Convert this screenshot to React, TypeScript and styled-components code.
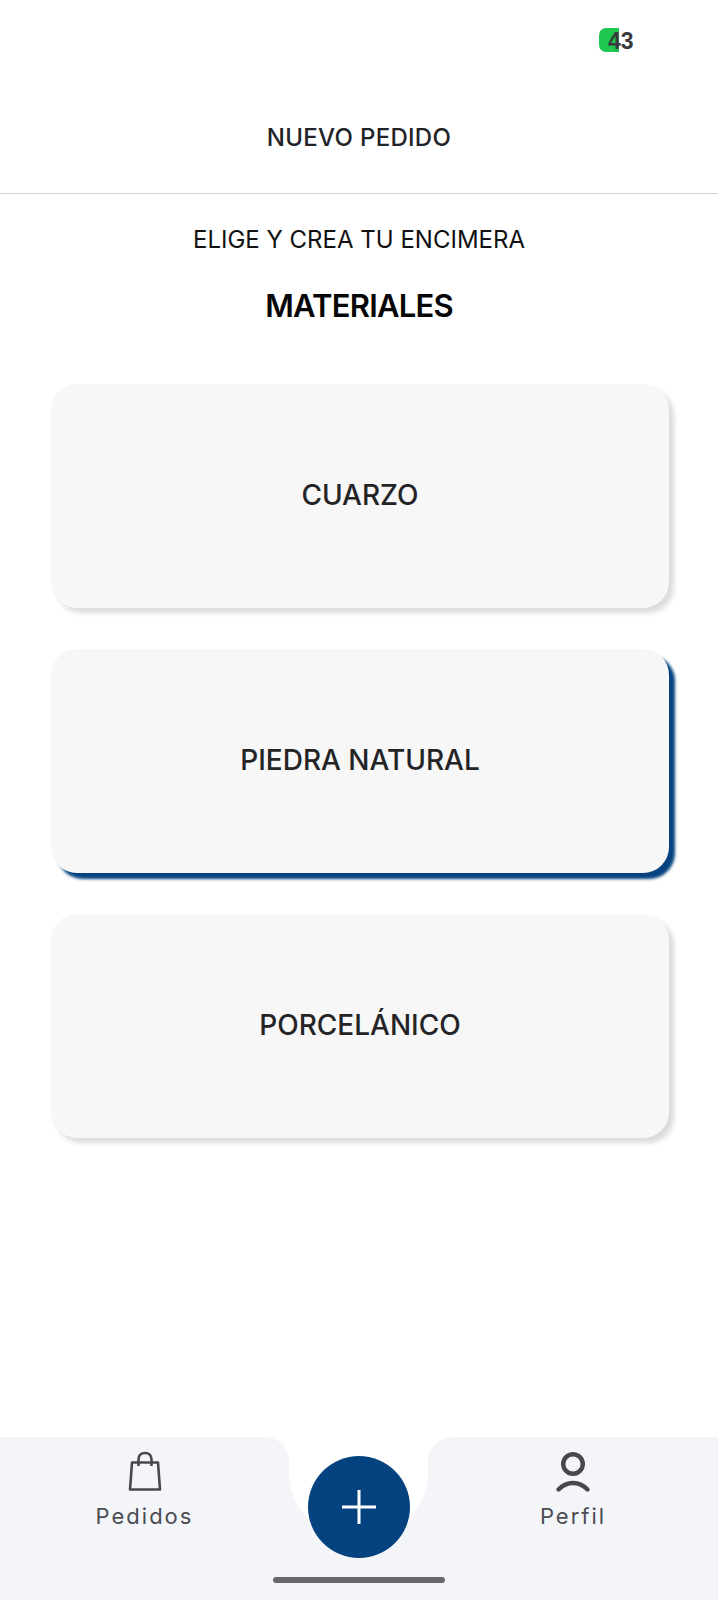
import { createGlobalStyle } from 'styled-components'
import styled from 'styled-components'

const MATERIALS = [
  { id: 1, name: 'CUARZO', active: false },
  { id: 2, name: 'PIEDRA NATURAL', active: true },
  { id: 3, name: 'PORCELÁNICO', active: false },
]

const GlobalStyle = createGlobalStyle`
  html, body {
    margin: 0;
    padding: 0;
    background: #fff;
  }
  * {
    box-sizing: border-box;
  }
`

const App = () => {
  return (
    <Page>
      <GlobalStyle />
      <StatusBar>
        <Battery>
          <BatteryFill />
          <BatteryText>43</BatteryText>
        </Battery>
      </StatusBar>

      <Header>
        <HeaderTitle>NUEVO PEDIDO</HeaderTitle>
      </Header>

      <Main>
        <Subtitle>ELIGE Y CREA TU ENCIMERA</Subtitle>
        <Title>MATERIALES</Title>

        <CardList>
          {MATERIALS.map((item) => (
            <Card key={item.id} $active={item.active}>
              {item.name}
            </Card>
          ))}
        </CardList>
      </Main>

      <BottomNav>
        <NavTab $side='left'>
          <svg width='36' height='42' viewBox='0 0 36 42' fill='none' stroke='#48484c' strokeWidth='2.6'>
            <path d='M5 11.5H31L33 38.5H3Z' strokeLinejoin='round' />
            <path d='M11.5 15V8.5C11.5 4.5 14 2 18 2S24.5 4.5 24.5 8.5V15' />
          </svg>
          <NavLabel>Pedidos</NavLabel>
        </NavTab>

        <NotchColumn>
          <Notch />
        </NotchColumn>

        <NavTab $side='right'>
          <svg width='36' height='42' viewBox='0 0 36 42' fill='none' stroke='#48484c' strokeWidth='4.4'>
            <circle cx='18' cy='13' r='9.8' />
            <path d='M3.5 38.5C8 34 13 32 18 32S28 34 32.5 38.5' strokeLinecap='round' />
          </svg>
          <NavLabel>Perfil</NavLabel>
        </NavTab>

        <AddButton>
          <svg width='36' height='36' viewBox='0 0 36 36' fill='none' stroke='#fff' strokeWidth='3'>
            <path d='M18 1V35M1 18H35' />
          </svg>
        </AddButton>
        <HomeIndicator />
      </BottomNav>
    </Page>
  )
}

const Page = styled.div`
  width: 718px;
  height: 1600px;
  display: flex;
  flex-direction: column;
  overflow: hidden;
  background: #fff;
  font-family: 'Inter', 'Noto Sans', sans-serif;
`

const StatusBar = styled.div`
  height: 80px;
  padding: 28px 82px 0 0;
  display: flex;
  justify-content: flex-end;
  align-items: flex-start;
`

const Battery = styled.div`
  position: relative;
  width: 37px;
  height: 26px;
`

const BatteryFill = styled.div`
  position: absolute;
  top: 0;
  left: 0;
  width: 20px;
  height: 24px;
  background: #1fc64f;
  border-radius: 7px 0 0 7px;
`

const BatteryText = styled.span`
  position: absolute;
  top: 0;
  left: 9px;
  font-family: 'Liberation Sans', sans-serif;
  font-size: 23px;
  line-height: 26px;
  font-weight: 700;
  color: #3a3a3c;
`

const Header = styled.header`
  height: 114px;
  padding-top: 42px;
  border-bottom: 1px solid #d2d2d2;
  text-align: center;
`

const HeaderTitle = styled.h1`
  margin: 0;
  font-size: 24px;
  line-height: 32px;
  font-weight: 500;
  letter-spacing: 0.3px;
  color: #222327;
`

const Main = styled.main`
  flex: 1;
  padding: 30px 49px 0 51px;
  display: flex;
  flex-direction: column;
`

const Subtitle = styled.div`
  margin: 0 -49px 0 -51px;
  font-size: 24px;
  line-height: 32px;
  font-weight: 400;
  text-align: center;
  color: #111;
`

const Title = styled.h2`
  margin: 30px -49px 0 -51px;
  font-size: 31px;
  line-height: 40px;
  font-weight: 600;
  letter-spacing: -0.8px;
  text-align: center;
  color: #060606;
`

const CardList = styled.div`
  margin-top: 58px;
  display: flex;
  flex-direction: column;
  gap: 41px;
`

const Card = styled.div<{ $active: boolean }>`
  height: 224px;
  padding-bottom: 2px;
  display: flex;
  align-items: center;
  justify-content: center;
  border-radius: 26px;
  background: #f7f7f8;
  font-size: 28px;
  font-weight: 500;
  color: #242426;
  box-shadow: ${(p) => (p.$active ? '6px 6px 3px #04437f' : '5px 5px 5px #dcdcdc')};
`

const BottomNav = styled.nav`
  position: relative;
  height: 163px;
  display: grid;
  grid-template-columns: 289px 139px 290px;
`

const NavTab = styled.div<{ $side: 'left' | 'right' }>`
  padding-top: 14px;
  display: flex;
  flex-direction: column;
  align-items: center;
  background: #f3f5f9;
  border-radius: ${(p) => (p.$side === 'left' ? '0 24px 0 0' : '24px 0 0 0')};
`

const NavLabel = styled.span`
  margin-top: 8px;
  font-size: 22px;
  line-height: 30px;
  letter-spacing: 2px;
  color: #4c4c52;
`

const NotchColumn = styled.div`
  margin-top: 24px;
  background: #f3f5f9;
`

const Notch = styled.div`
  margin-top: -24px;
  height: 104px;
  background: #fff;
  border-radius: 0 0 70px 70px;
`

const AddButton = styled.button`
  position: absolute;
  top: 19px;
  left: 308px;
  width: 102px;
  height: 102px;
  padding: 0;
  border: none;
  border-radius: 50%;
  background: #04437f;
  display: flex;
  align-items: center;
  justify-content: center;
`

const HomeIndicator = styled.div`
  position: absolute;
  left: 273px;
  bottom: 17px;
  width: 172px;
  height: 6px;
  border-radius: 3px;
  background: #68686c;
`

export default App
